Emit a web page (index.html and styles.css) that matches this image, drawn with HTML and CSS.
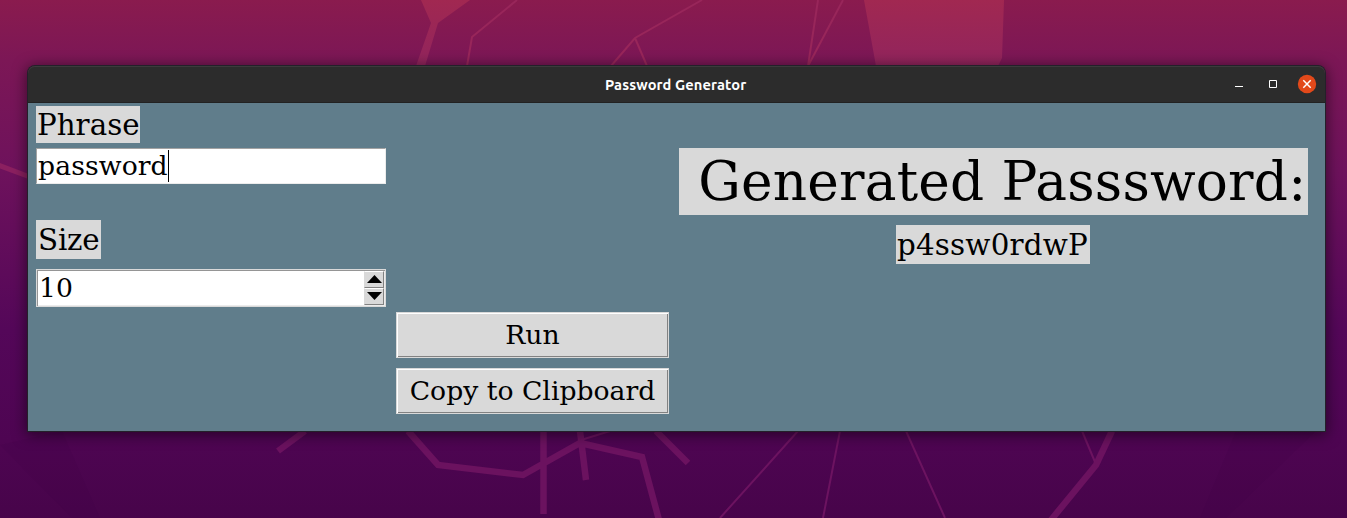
FILE: index.html
```html
<!DOCTYPE html>
<html lang="en">
<head>
<meta charset="utf-8">
<title>Password Generator</title>
<link rel="stylesheet" href="styles.css">
</head>
<body>
<main class="desktop">
  <svg class="wallpaper" width="1347" height="518" viewBox="0 0 1347 518" aria-hidden="true">
    <defs>
      <linearGradient id="shape" x1="0" y1="0" x2="0" y2="1">
        <stop offset="0" stop-color="#a12851"/>
        <stop offset="1" stop-color="#91245d"/>
      </linearGradient>
    </defs>
    <path class="facet" d="M0 445L62 431L100 518H72ZM1236 431H1316L1226 518H1200Z"/>
    <path fill="url(#shape)" d="M421 0H470L438 23L425 66H416L431 23ZM864 0H1004L1002 58L998 66H979L991 61L980 66H876Z"/>
    <g class="thin-upper">
      <path d="M517 0L472 37L467 66M702 0L635 38L611 66M635 38L647 66M818 0L808 66L843 0"/>
    </g>
    <path class="side" d="M-2 165L30 177"/>
    <g class="thick">
      <path d="M305 431L278 451M408 431L438 465L523 475L580 443L642 457L659 520M543.500 431V514M580 431L586 480M656 431L688 463M1112 431L1096 465L1051 520"/>
    </g>
    <g class="thin-lower">
      <path d="M581 440L610 431M798 431L720 518M840 431L823 518M906 431L945 518M1082 431L1095 462"/>
    </g>
  </svg>
  <section class="window">
    <header class="titlebar">
      <h1 class="title">Password Generator</h1>
      <div class="controls">
        <svg width="18" height="18" viewBox="0 0 18 18"><path d="M5 11.500H13" stroke="#fff"/></svg>
        <svg width="18" height="18" viewBox="0 0 18 18"><path d="M5.500 5.500H12.500V12.500H5.500Z" fill="none" stroke="#fff"/></svg>
        <svg width="18" height="18" viewBox="0 0 18 18"><circle cx="9" cy="9" r="9.200" fill="#e2491a"/><path d="M5.300 5.300L12.700 12.700M12.700 5.300L5.300 12.700" stroke="#fff" stroke-width="1.500"/></svg>
      </div>
    </header>
    <div class="content">
      <div class="column inputs">
        <div class="label phrase-label">Phrase</div>
        <div class="entry"><span class="value">password</span><span class="caret"></span></div>
        <div class="label size-label">Size</div>
        <div class="spinbox">
          <span class="number">10</span>
          <div class="steppers">
            <div class="step"><svg width="15" height="8" viewBox="0 0 15 8"><path d="M0 8L7.500 0L15 8Z"/></svg></div>
            <div class="step"><svg width="15" height="8" viewBox="0 0 15 8"><path d="M0 0H15L7.500 8Z"/></svg></div>
          </div>
        </div>
      </div>
      <div class="column actions">
        <div class="button">Run</div>
        <div class="button">Copy to Clipboard</div>
      </div>
      <div class="column output">
        <div class="label heading"> Generated Passsword:</div>
        <div class="label result">p4ssw0rdwP</div>
      </div>
    </div>
  </section>
</main>
</body>
</html>
```

FILE: styles.css
```css
* { box-sizing: border-box; }
body { margin: 0; }
svg { display: block; overflow: visible; }
.desktop {
  position: relative;
  width: 1347px;
  height: 518px;
  padding: 66px 22px 0 28px;
  overflow: hidden;
  background: linear-gradient(#8a1b4e 0, #7c1756 60px, #6e125c 170px, #540759 330px, #4e0552 440px, #47044a 518px);
}
.wallpaper { position: absolute; left: 0; top: 0; }
.facet { fill: #30003a; opacity: 0.08; }
.thin-upper { fill: none; stroke: #98265a; stroke-width: 2; }
.thin-lower { fill: none; stroke: #6c1360; stroke-width: 2; }
.thick { fill: none; stroke: #6b125f; stroke-width: 6.500; }
.side { stroke: #8b2060; stroke-width: 5; }
.window {
  position: relative;
  width: 1297px;
  border-radius: 7px 7px 0 0;
  box-shadow: 0 0 0 1px #24202a, 0 2px 14px 2px rgba(0, 0, 0, 0.5);
}
.titlebar {
  height: 37px;
  display: grid;
  grid-template-columns: 1fr auto 1fr;
  align-items: center;
  padding: 0 9px;
  background: #2c2c2c;
  border-radius: 7px 7px 0 0;
  border-bottom: 1px solid #222;
  box-shadow: inset 0 1px #3b3b3b;
}
.title {
  grid-column: 2;
  margin: 0;
  padding-top: 2px;
  font: bold 14.667px/20px Ubuntu, "Noto Sans", sans-serif;
  color: #fff;
  white-space: nowrap;
  width: 143px;
  letter-spacing: 0.100px;
}
.controls { display: flex; gap: 16px; justify-content: flex-end; }
.content {
  height: 328px;
  display: flex;
  align-items: flex-start;
  gap: 10px;
  padding: 3px 17px 0 8px;
  background: #607d8b;
  font: 26.667px/32px "DejaVu Serif", serif;
  color: #000;
}
.column { display: flex; flex-direction: column; }
.inputs { width: 350px; align-items: flex-start; }
.label {
  background: #d9d9d9;
  font-size: 29.333px;
  white-space: pre;
  padding: 0 1px;
}
.phrase-label { width: 104px; height: 37px; line-height: 39px; }
.entry {
  width: 350px;
  height: 36px;
  margin: 5px 0 36px;
  display: flex;
  padding: 1px;
  background: #fff;
  border: 1px solid;
  border-color: #a3a3a3 #ececec #ececec #a3a3a3;
}
.value { letter-spacing: 0.100px; }
.caret { width: 1px; height: 32px; background: #000; }
.size-label { width: 65px; height: 39px; line-height: 41px; padding-left: 2px; letter-spacing: -0.200px; }
.spinbox {
  width: 350px;
  height: 38px;
  margin-top: 10px;
  display: flex;
  justify-content: space-between;
  border: 1px solid #d9d9d9;
  background: #fff;
  box-shadow: inset 1px 1px #959595, inset -1px -1px #ececec;
  padding: 1px 1px 1px 2px;
}
.number { padding-top: 1px; }
.steppers { width: 20px; display: flex; flex-direction: column; }
.step {
  height: 17px;
  padding: 3px 0 0 2px;
  background: #d9d9d9;
  border: 1px solid;
  border-color: #fff #828282 #828282 #d9d9d9;
}
.actions { width: 273px; padding-top: 206px; gap: 10px; }
.button {
  height: 46px;
  border: 1px solid #d9d9d9;
  background: #d9d9d9;
  box-shadow: inset 1px 1px #fff, inset -1px -1px #828282;
  text-align: center;
  line-height: 44px;
}
.output { width: 629px; padding-top: 42px; gap: 10px; }
.heading { width: 629px; height: 67px; padding-left: 2px; font-size: 53.333px; line-height: 67px; letter-spacing: 0.200px; }
.result { width: 194px; height: 39px; margin-left: 217px; line-height: 41px; letter-spacing: 0.200px; }
```
